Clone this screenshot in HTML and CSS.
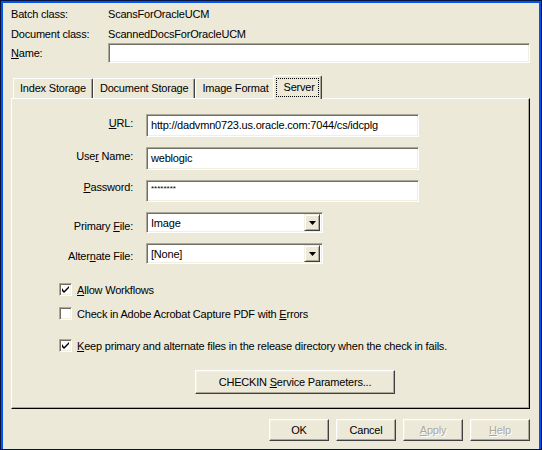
FILE: index.html
```html
<!DOCTYPE html>
<html>
<head>
<meta charset="utf-8">
<link rel="stylesheet" href="styles.css">
</head>
<body>
<div class="frame">
<div class="window">
  <div class="header">
    <div class="hrow r1"><span class="hl">Batch class:</span><span>ScansForOracleUCM</span></div>
    <div class="hrow r2"><span class="hl">Document class:</span><span>ScannedDocsForOracleUCM</span></div>
    <div class="hrow r3"><span class="hl"><u>N</u>ame:</span><div class="field name-field"></div></div>
  </div>

  <div class="tabs">
    <div class="tab first">Index Storage</div>
    <div class="tab">Document Storage</div>
    <div class="tab">Image Format</div>
    <div class="tab sel"><span class="focus">Server</span></div>
  </div>

  <div class="panel">
    <div class="form">
      <div class="lbl l-url"><u>U</u>RL:</div>
      <div class="field text">http://dadvmn0723.us.oracle.com:7044/cs/idcplg</div>

      <div class="lbl l-user">Use<u>r</u> Name:</div>
      <div class="field text">weblogic</div>

      <div class="lbl l-pass"><u>P</u>assword:</div>
      <div class="field text pass">********</div>

      <div class="lbl l-sel">Primary <u>F</u>ile:</div>
      <div class="field select"><span class="sel-text">Image</span><span class="drop"><svg width="7" height="4" viewBox="0 0 7 4"><path d="M0 0H7L3.5 4Z" fill="#000"/></svg></span></div>

      <div class="lbl l-sel2">Alter<u>n</u>ate File:</div>
      <div class="field select"><span class="sel-text">[None]</span><span class="drop"><svg width="7" height="4" viewBox="0 0 7 4"><path d="M0 0H7L3.5 4Z" fill="#000"/></svg></span></div>
    </div>

    <div class="checks">
      <div class="check c1"><span class="box"><svg width="7" height="7" viewBox="0 0 7 7"><path d="M0 2V5L2 7L7 2V-0L2 5Z"/></svg></span><span><u>A</u>llow Workflows</span></div>
      <div class="check c2"><span class="box"></span><span>Check in Adobe Acrobat Capture PDF with <u>E</u>rrors</span></div>
      <div class="check c3"><span class="box"><svg width="7" height="7" viewBox="0 0 7 7"><path d="M0 2V5L2 7L7 2V-0L2 5Z"/></svg></span><span><u>K</u>eep primary and alternate files in the release directory when the check in fails.</span></div>
    </div>

    <div class="btn checkin"><span>CHECKIN <u>S</u>ervice Parameters...</span></div>
  </div>

  <div class="footer">
    <div class="btn fbtn"><span>OK</span></div>
    <div class="btn fbtn"><span>Cancel</span></div>
    <div class="btn fbtn disabled"><span><u>A</u>pply</span></div>
    <div class="btn fbtn disabled"><span><u>H</u>elp</span></div>
  </div>
</div>
</div>
</body>
</html>
```

FILE: styles.css
```css
* { box-sizing: border-box; }
html, body { margin: 0; padding: 0; }
body {
  width: 542px;
  height: 450px;
  background: #0A1240;
  font-family: "Liberation Sans", Arial, sans-serif;
  font-size: 11px;
  letter-spacing: -0.2px;
  color: #000;
  overflow: hidden;
}
u { text-decoration: underline; text-underline-offset: 1px; }

.frame {
  margin: 1px 1px 0 1px;
  width: 540px;
  height: 448px;
  padding: 2px 2px 0 2px;
  background: #0055EA;
}
.window {
  width: 536px;
  height: 446px;
  background: #ECE9D8;
  display: flex;
  flex-direction: column;
}
.window > * { flex: none; }

/* header */
.header { padding: 1px 0 0 8px; }
.hrow { display: flex; align-items: center; }
.hrow.r1 { height: 20px; }
.hrow.r2 { height: 19px; }
.hrow.r3 { height: 20px; }
.hl { width: 97px; flex: none; }

.field {
  background: #fff;
  border: 1px solid;
  border-color: #ACA899 #fff #fff #ACA899;
  box-shadow: inset 1px 1px #716F64, inset -1px -1px #F1EFE2;
}
.name-field { width: 422px; height: 20px; }

/* tabs */
.tabs {
  display: flex;
  align-items: flex-end;
  height: 23px;
  margin: 12px 0 0 8px;
  position: relative;
  z-index: 2;
}
.tab {
  height: 20px;
  line-height: 19px;
  padding: 0 6px;
  border: 1px solid #fff;
  border-bottom: none;
  border-right-color: #404040;
  box-shadow: inset -1px 0 #ACA899;
  border-radius: 2px 2px 0 0;
  white-space: nowrap;
}
.tab.first { margin-left: 2px; }
.tab.sel {
  height: 24px;
  margin: 0 -1px -1px -3px;
  padding: 2px 2px 0 2px;
  background: #ECE9D8;
}
.focus {
  display: block;
  padding: 0 4px 0 8px;
  height: 19px;
  line-height: 19px;
  outline: 1px dotted #000;
  outline-offset: -1px;
}

/* panel */
.panel {
  margin-left: 8px;
  width: 519px;
  height: 311px;
  border: 1px solid #fff;
  border-right-color: #000;
  border-bottom-color: #000;
  box-shadow: inset -1px -1px #ACA899;
  padding-top: 15px;
  position: relative;
  z-index: 1;
}
.form {
  display: grid;
  grid-template-columns: 121px 273px;
  grid-template-rows: 23px 23px 22px 21px 21px;
  column-gap: 13px;
  row-gap: 10px;
}
.lbl { text-align: right; line-height: 13px; }
.l-url { padding-top: 3px; }
.l-user { padding-top: 3px; }
.l-pass { padding-top: 1px; }
.l-sel { padding-top: 8px; }
.l-sel2 { padding-top: 7px; }
.text { padding: 0 4px; line-height: 20px; white-space: nowrap; overflow: hidden; }
.pass { font-size: 8px; line-height: 13px; letter-spacing: 0; padding-top: 1px; }
.select {
  width: 177px;
  display: flex;
  align-items: center;
  padding: 2px;
}
.sel-text { flex: 1; padding-left: 2px; }
.drop {
  width: 16px;
  height: 17px;
  display: flex;
  align-items: center;
  justify-content: center;
  background: #ECE9D8;
  border: 1px solid;
  border-color: #F1EFE2 #404040 #404040 #F1EFE2;
  box-shadow: inset 1px 1px #fff, inset -1px -1px #ACA899;
}

.checks { margin: 19px 0 0 47px; }
.check { display: flex; align-items: center; height: 13px; gap: 5px; white-space: nowrap; }
.check.c2 { margin-top: 11px; }
.check.c3 { margin-top: 19px; }
.box {
  width: 13px;
  height: 13px;
  flex: none;
  background: #fff;
  border: 1px solid;
  border-color: #ACA899 #fff #fff #ACA899;
  box-shadow: inset 1px 1px #716F64, inset -1px -1px #F1EFE2;
  display: flex;
  align-items: center;
  justify-content: center;
}
.box svg path { fill: #000; }

.btn {
  display: flex;
  align-items: center;
  justify-content: center;
  background: #ECE9D8;
  border: 1px solid;
  border-color: #fff #404040 #404040 #fff;
  box-shadow: inset -1px -1px #ACA899, inset 1px 1px #F1EFE2;
  white-space: nowrap;
}
.checkin {
  width: 200px;
  height: 24px;
  margin: 18px 0 0 183px;
}

.footer {
  display: flex;
  justify-content: flex-end;
  gap: 7px;
  margin-top: 10px;
  padding-right: 9px;
}
.fbtn { width: 60px; height: 22px; }
.disabled { color: #ACA899; text-shadow: 1px 1px #fff; }
```
